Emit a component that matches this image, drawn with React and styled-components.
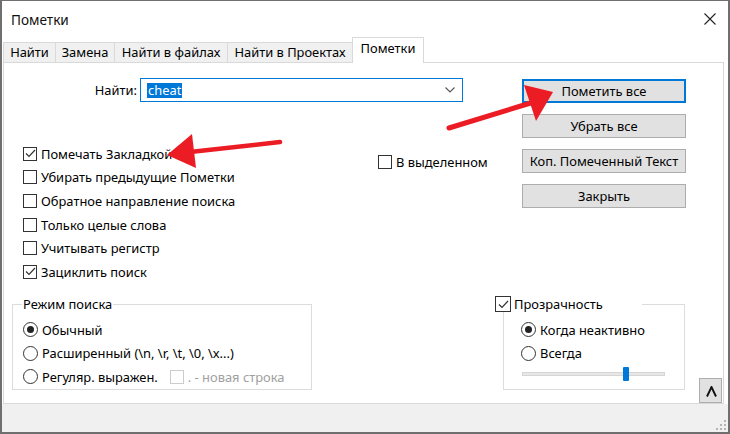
import React from "react";
import styled, { createGlobalStyle } from "styled-components";

const GlobalStyle = createGlobalStyle`
  html, body { margin: 0; padding: 0; background: #fff; }
  body {
    font-family: "Noto Sans", "Open Sans", sans-serif;
    font-size: 12.9px;
    color: #000;
  }
  * { box-sizing: border-box; }
`;

const Window = styled.div`
  position: relative;
  width: 730px;
  height: 434px;
  display: flex;
  flex-direction: column;
  background: #fff;
  border: 2px solid #6f6f6f;
  border-top-width: 1px;
  overflow: hidden;
`;

const TitleBar = styled.div`
  height: 36px;
  flex: none;
  display: flex;
  align-items: center;
  justify-content: space-between;
  padding: 0 9px 0 9px;
`;

const Title = styled.div`
  font-size: 13.6px;
  color: #111;
`;

const CloseBtn = styled.div`
  width: 14px;
  height: 14px;
  display: flex;
  margin-right: 2px;
`;

const TabStrip = styled.div`
  height: 25px;
  flex: none;
  display: flex;
  align-items: flex-end;
  padding-left: 1px;
`;

const Tab = styled.div`
  position: relative;
  width: ${(p) => p.$w}px;
  height: ${(p) => (p.$active ? 26 : 20)}px;
  margin-right: -1px;
  margin-bottom: ${(p) => (p.$active ? -1 : 0)}px;
  padding-bottom: ${(p) => (p.$active ? 5 : 1)}px;
  display: flex;
  align-items: center;
  justify-content: center;
  border: 1px solid #d9d9d9;
  border-bottom: none;
  background: ${(p) => (p.$active ? "#fff" : "#f0f0f0")};
  z-index: ${(p) => (p.$active ? 2 : 1)};
  white-space: nowrap;
`;

const Panel = styled.div`
  flex: 1;
  margin: 0 4px 0 1px;
  border: 1px solid #d9d9d9;
  display: flex;
  flex-direction: column;
`;

const TopSection = styled.div`
  display: flex;
  padding-top: 15px;
`;

const LeftCol = styled.div`
  width: 518px;
  flex: none;
`;

const FindRow = styled.div`
  display: flex;
  align-items: center;
  height: 24px;
`;

const FindLabel = styled.div`
  width: 133px;
  text-align: right;
`;

const Combo = styled.div`
  width: 323px;
  height: 24px;
  margin-left: 3px;
  border: 1px solid #0078d7;
  display: flex;
  align-items: center;
  justify-content: space-between;
  padding: 0 7px 0 6px;
`;

const Selected = styled.span`
  background: #0078d7;
  color: #fff;
  line-height: 15px;
  padding: 0 1px;
`;

const OptionsRow = styled.div`
  display: flex;
  margin-top: 40px;
`;

const CheckList = styled.div`
  width: 355px;
  margin-left: 19px;
  display: flex;
  flex-direction: column;
`;

const Row = styled.div`
  height: ${(p) => p.$h || 23.6}px;
  display: flex;
  align-items: center;
  gap: 4px;
  white-space: nowrap;
  color: ${(p) => (p.$disabled ? "#a0a0a0" : "#000")};
`;

const InSelection = styled(Row)`
  margin-top: 8px;
`;

const Box = styled.span`
  width: ${(p) => p.$size || 14}px;
  height: ${(p) => p.$size || 14}px;
  flex: none;
  border: 1px solid ${(p) => (p.$disabled ? "#cccccc" : "#333")};
  background: #fff;
  display: flex;
  align-items: center;
  justify-content: center;
`;

const Radio = styled.span`
  width: 15px;
  height: 15px;
  flex: none;
  border-radius: 50%;
  border: 1px solid #333;
  display: flex;
  align-items: center;
  justify-content: center;
  &::after {
    content: "";
    width: 7px;
    height: 7px;
    border-radius: 50%;
    background: ${(p) => (p.$checked ? "#222" : "transparent")};
  }
`;

const ButtonCol = styled.div`
  width: 164px;
  flex: none;
  padding-top: 1px;
  display: flex;
  flex-direction: column;
  gap: 11px;
`;

const Button = styled.div`
  height: 24px;
  display: flex;
  align-items: center;
  justify-content: center;
  background: #e1e1e1;
  border: 1px solid ${(p) => (p.$default ? "#0078d7" : "#adadad")};
  box-shadow: ${(p) => (p.$default ? "inset 0 0 0 1px #0078d7" : "none")};
`;

const BottomSection = styled.div`
  margin-top: auto;
  display: flex;
  align-items: flex-end;
`;

const Group = styled.fieldset`
  margin: 0 0 13px ${(p) => p.$ml}px;
  width: ${(p) => p.$w}px;
  height: 94px;
  min-width: 0;
  padding: 6px 0 0 ${(p) => p.$pl}px;
  border: 1px solid #dcdcdc;
  display: flex;
  flex-direction: column;
`;

const Legend = styled.legend`
  padding: 0 1px;
  margin-left: -1px;
  line-height: 16px;
`;

const CheckLegend = styled.legend`
  margin-left: -26px;
  width: 147px;
  padding: 0;
  background: #fff;
  display: flex;
  align-items: center;
  gap: 3px;
  height: 16px;
`;

const SliderWrap = styled.div`
  height: 17px;
  margin-left: 1px;
  display: flex;
  align-items: center;
`;

const Track = styled.div`
  position: relative;
  width: 143px;
  height: 4px;
  background: #e7e7e7;
  border: 1px solid #d6d6d6;
`;

const Thumb = styled.div`
  position: absolute;
  top: -6px;
  width: 6px;
  height: 14px;
  background: #0078d7;
  border-radius: 1px;
`;

const CollapseBtn = styled.div`
  width: 23px;
  height: 25px;
  margin-left: 14px;
  background: #e1e1e1;
  border: 1px solid #adadad;
  display: flex;
  align-items: center;
  justify-content: center;
  padding: 1px 0 0 2px;
`;

const StatusBar = styled.div`
  height: 28px;
  flex: none;
  background: #f0f0f0;
  display: flex;
  justify-content: flex-end;
  align-items: flex-end;
  padding: 0 1px 1px 0;
`;

const Overlay = styled.svg`
  position: absolute;
  left: 0;
  top: 0;
  pointer-events: none;
`;

const Check = ({ checked, disabled, size }) => (
  <Box $disabled={disabled} $size={size}>
    {checked && (
      <svg width="11" height="9" viewBox="0 0 11 9">
        <polyline points="1,4.5 4,7.5 10,1" fill="none" stroke="#333" strokeWidth="1.2" />
      </svg>
    )}
  </Box>
);

const tabs = [
  { label: "Найти", w: 53 },
  { label: "Замена", w: 60 },
  { label: "Найти в файлах", w: 114 },
  { label: "Найти в Проектах", w: 126 },
  { label: "Пометки", w: 72, active: true },
];

const options = [
  { label: "Помечать Закладкой", checked: true },
  { label: "Убирать предыдущие Пометки" },
  { label: "Обратное направление поиска" },
  { label: "Только целые слова" },
  { label: "Учитывать регистр" },
  { label: "Зациклить поиск", checked: true },
];

const buttons = ["Пометить все", "Убрать все", "Коп. Помеченный Текст", "Закрыть"];

export default function App() {
  return (
    <>
      <GlobalStyle />
      <Window>
        <TitleBar>
          <Title>Пометки</Title>
          <CloseBtn>
            <svg width="14" height="14" viewBox="0 0 14 14">
              <path d="M1.5 1.5 L12.5 12.5 M12.5 1.5 L1.5 12.5" stroke="#222" strokeWidth="1.1" />
            </svg>
          </CloseBtn>
        </TitleBar>

        <TabStrip>
          {tabs.map((t) => (
            <Tab key={t.label} $w={t.w} $active={t.active}>
              {t.label}
            </Tab>
          ))}
        </TabStrip>

        <Panel>
          <TopSection>
            <LeftCol>
              <FindRow>
                <FindLabel>Найти:</FindLabel>
                <Combo>
                  <Selected>cheat</Selected>
                  <svg width="10" height="6" viewBox="0 0 10 6">
                    <polyline points="0.5,0.5 5,5 9.5,0.5" fill="none" stroke="#555" strokeWidth="1.1" />
                  </svg>
                </Combo>
              </FindRow>
              <OptionsRow>
                <CheckList>
                  {options.map((o) => (
                    <Row key={o.label}>
                      <Check checked={o.checked} />
                      {o.label}
                    </Row>
                  ))}
                </CheckList>
                <InSelection>
                  <Check />В выделенном
                </InSelection>
              </OptionsRow>
            </LeftCol>
            <ButtonCol>
              {buttons.map((b, i) => (
                <Button key={b} $default={i === 0}>
                  {b}
                </Button>
              ))}
            </ButtonCol>
          </TopSection>

          <BottomSection>
            <Group $ml={8} $w={300} $pl={10}>
              <Legend>Режим поиска</Legend>
              <Row $h={23.5}>
                <Radio $checked />Обычный
              </Row>
              <Row $h={23.5}>
                <Radio />Расширенный (\n, \r, \t, \0, \x...)
              </Row>
              <Row $h={23.5}>
                <Radio />Регуляр. выражен.
                <Row $disabled style={{ marginLeft: 8 }}>
                  <Check disabled />. - новая строка
                </Row>
              </Row>
            </Group>

            <Group $ml={191} $w={182} $pl={17}>
              <CheckLegend>
                <Check checked size={16} />
                Прозрачность
              </CheckLegend>
              <Row $h={23.5}>
                <Radio $checked />Когда неактивно
              </Row>
              <Row $h={23.5}>
                <Radio />Всегда
              </Row>
              <SliderWrap>
                <Track>
                  <Thumb style={{ left: 100 }} />
                </Track>
              </SliderWrap>
            </Group>

            <CollapseBtn>
              <svg width="11" height="11" viewBox="0 0 11 11">
                <polyline points="1,10.5 5.5,1 10,10.5" fill="none" stroke="#111" strokeWidth="1.9" />
              </svg>
            </CollapseBtn>
          </BottomSection>
        </Panel>

        <StatusBar>
          <svg width="11" height="11" viewBox="0 0 11 11">
            {[[8, 0], [4, 4], [8, 4], [0, 8], [4, 8], [8, 8]].map(([x, y]) => (
              <rect key={`${x}-${y}`} x={x} y={y} width="2" height="2" fill="#b5b5b5" />
            ))}
          </svg>
        </StatusBar>

        <Overlay width="730" height="434" viewBox="0 0 730 434">
          <line x1="447" y1="127" x2="532" y2="101" stroke="#ec1c24" strokeWidth="5" strokeLinecap="round" />
          <polygon points="522,84 551,91 534,120" fill="#ec1c24" />
          <line x1="278" y1="141" x2="188" y2="151" stroke="#ec1c24" strokeWidth="4.5" strokeLinecap="round" />
          <polygon points="165,154 190,133 194,167" fill="#ec1c24" />
        </Overlay>
      </Window>
    </>
  );
}
